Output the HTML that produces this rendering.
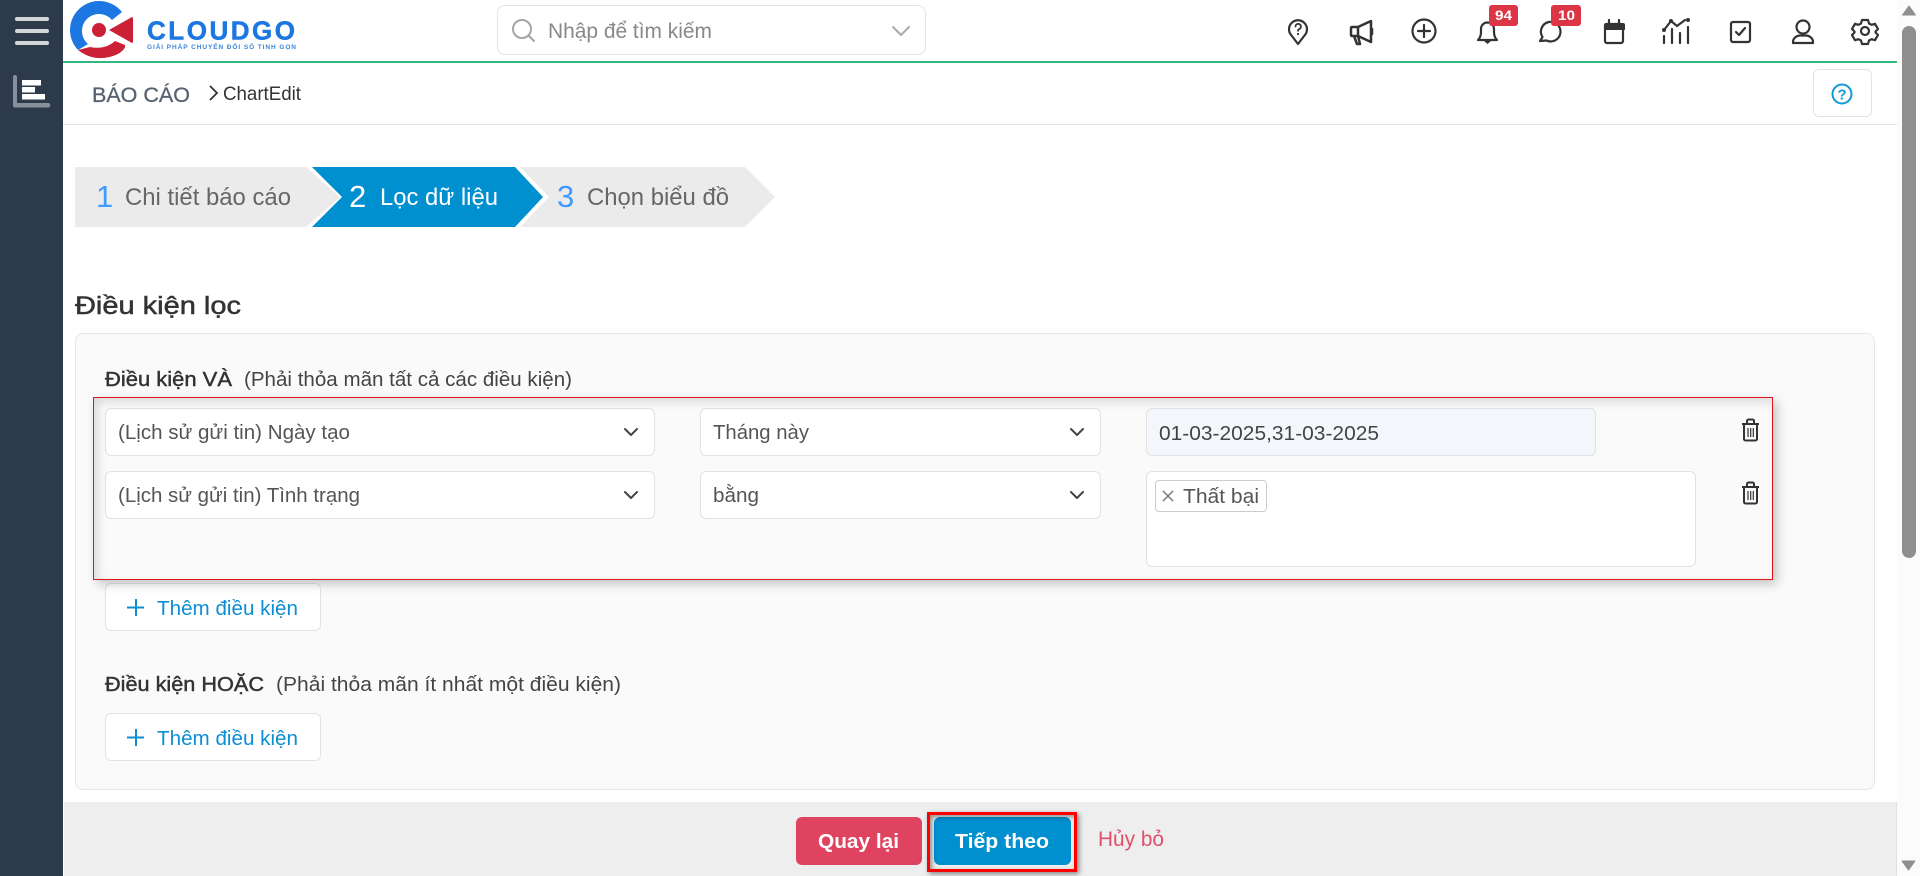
<!DOCTYPE html>
<html lang="vi">
<head>
<meta charset="utf-8">
<title>ChartEdit</title>
<style>
html,body{margin:0;padding:0;width:1920px;height:876px;overflow:hidden;background:#fff;font-family:"Liberation Sans",sans-serif}
.b{position:absolute;box-sizing:border-box}
.in{background:#fff;border:1px solid #e2e2e2;border-radius:6px}
svg.o{position:absolute;left:0;top:0;pointer-events:none}
svg.o text{font-family:"Liberation Sans",sans-serif}
.t{font-size:20px;fill:#555}
.d{font-size:20px;fill:#444}
.s{font-size:20px;fill:#333;stroke:#333;stroke-width:.45px}
.a{font-size:20px;fill:#0b8ed3}
.st{font-size:24px;fill:#666}
.n{font-size:31px;fill:#3f9bff}
.i{fill:none;stroke:#333;stroke-width:2.200;stroke-linecap:round;stroke-linejoin:round}
</style>
</head>
<body>
<!-- sidebar -->
<div class="b" style="left:0;top:0;width:63px;height:876px;background:#2c3a4a"></div>
<!-- top bar -->
<div class="b" style="left:63px;top:61px;width:1834px;height:2px;background:#35b77f"></div>
<div class="b" style="left:497px;top:5px;width:429px;height:50px;border:1px solid #e3e3e3;border-radius:8px"></div>
<div class="b" style="left:63px;top:124px;width:1834px;height:1px;background:#e2e2e2"></div>
<div class="b" style="left:1813px;top:69px;width:59px;height:48px;border:1px solid #e3e3e3;border-radius:6px"></div>
<!-- panel -->
<div class="b" style="left:75px;top:333px;width:1800px;height:457px;background:#fafafa;border:1px solid #e6e6e6;border-radius:8px"></div>
<div class="b in" style="left:105px;top:408px;width:550px;height:48px"></div>
<div class="b in" style="left:105px;top:471px;width:550px;height:48px"></div>
<div class="b in" style="left:700px;top:408px;width:401px;height:48px"></div>
<div class="b in" style="left:700px;top:471px;width:401px;height:48px"></div>
<div class="b in" style="left:1146px;top:408px;width:450px;height:48px;background:#f3f7fb"></div>
<div class="b in" style="left:1146px;top:471px;width:550px;height:96px"></div>
<div class="b" style="left:1155px;top:480px;width:112px;height:32px;border:1px solid #ccc;border-radius:4px;background:#fff"></div>
<div class="b in" style="left:105px;top:583px;width:216px;height:48px"></div>
<div class="b in" style="left:105px;top:713px;width:216px;height:48px"></div>
<div class="b" style="left:93px;top:397px;width:1680px;height:183px;border:1px solid #e0141c;box-shadow:4px 4px 10px rgba(0,0,0,.22),inset 4px 4px 10px rgba(0,0,0,.13)"></div>
<!-- footer -->
<div class="b" style="left:64px;top:802px;width:1833px;height:74px;background:#eee;border-right:1px solid #e0e0e0"></div>
<div class="b" style="left:796px;top:817px;width:126px;height:48px;background:#e0435f;border-radius:6px"></div>
<div class="b" style="left:934px;top:817px;width:137px;height:48px;background:#0090d0;border-radius:6px"></div>
<div class="b" style="left:927px;top:812px;width:150px;height:60px;border:3px solid #f00;box-shadow:2px 2px 5px rgba(0,0,0,.45),inset 2px 2px 5px rgba(0,0,0,.4)"></div>
<!-- scrollbar -->
<div class="b" style="left:1897px;top:0;width:23px;height:876px;background:#fbfbfb"></div>
<div class="b" style="left:1902px;top:26px;width:14px;height:532px;background:#8e8e8e;border-radius:7px"></div>

<svg class="o" width="1920" height="876" viewBox="0 0 1920 876" xmlns="http://www.w3.org/2000/svg">
<!-- sidebar icons -->
<g fill="#d3d6d9">
<rect x="15" y="17" width="34" height="4" rx="2"/><rect x="15" y="29" width="34" height="4" rx="2"/><rect x="15" y="41" width="34" height="4" rx="2"/>
</g>
<path d="M13 77a2 2 0 0 1 4 0v26h31a2 2 0 0 1 0 4.500H15a2 2 0 0 1-2-2z" fill="#87909a"/>
<g fill="#fff"><rect x="22" y="80" width="19" height="5.500"/><rect x="22" y="87" width="13" height="5.500"/><rect x="22" y="94" width="23" height="5.500"/></g>
<!-- logo -->
<path d="M122 12A29.500 29.500 0 0 0 99.500 1 29 29 0 0 0 78 50L88 44A17 17 0 0 1 99.500 14 17 17 0 0 1 112 20Z" fill="#1c77e2"/>
<path d="M78 50Q96 64 118 54 126 49 125 45L115 41Q105 50 90 47Z" fill="#cb2035"/>
<circle cx="99" cy="30" r="7" fill="#cb2035"/>
<path d="M109 30L132 17Q133 17 133 19V41Q133 43 132 43Z" fill="#cb2035"/>
<text x="147" y="39.500" font-size="26" font-weight="700" fill="#1c77e2" stroke="#1c77e2" stroke-width=".5" textLength="148" lengthAdjust="spacing">CLOUDGO</text>
<text x="147" y="49" font-size="6.500" font-weight="700" fill="#3a86dc" textLength="149" lengthAdjust="spacing">GIẢI PHÁP CHUYỂN ĐỔI SỐ TINH GỌN</text>
<!-- search -->
<g fill="none" stroke="#a5a5a5" stroke-width="2" stroke-linecap="round"><circle cx="522" cy="29" r="9"/><path d="M529 36l5 5"/></g>
<text x="548" y="38" font-size="21" fill="#888" textLength="164" lengthAdjust="spacingAndGlyphs">Nhập để tìm kiếm</text>
<path d="M893 27l8 8 8-8" fill="none" stroke="#a9a9a9" stroke-width="2" stroke-linecap="round"/>
<!-- top icons -->
<path class="i" d="M1298 44L1291.500 35.500A9 9 0 1 1 1304.500 35.500Z"/>
<path class="i" style="stroke-width:1.800" d="M1295.500 26.500a2.700 2.700 0 1 1 3.700 2.600c-.8.400-1.100.9-1.100 1.700"/><circle cx="1298" cy="34" r="1.100" fill="#333"/>
<path class="i" style="stroke-width:2.500" d="M1352 27h6l13-6v21l-13-6h-6a1 1 0 0 1-1-1v-7a1 1 0 0 1 1-1zM1358 27v9M1354 36l3 8h3l-2-8M1372 29v5"/>
<circle class="i" cx="1424" cy="31" r="11.500"/><path class="i" d="M1424 25v12M1418 31h12"/>
<path class="i" d="M1478 40c2-2 3-4 3-8v-3a6.500 6.500 0 0 1 13 0v3c0 4 1 6 3 8z"/><path d="M1484 41h7l-3.500 3z" fill="#333"/>
<path class="i" d="M1540 41l2.500-4a9.800 9.800 0 1 1 4 3.500z"/>
<rect class="i" x="1605" y="24" width="18" height="19" rx="2"/><path d="M1604 25a2 2 0 0 1 2-2h17a2 2 0 0 1 2 2v5h-21z" fill="#333"/><path class="i" d="M1609 20v3M1619 20v3"/>
<path class="i" d="M1664 30l7-9 6 5 8-6"/><circle cx="1664" cy="30" r="2" fill="#333"/><circle cx="1671" cy="21" r="2" fill="#333"/><circle cx="1688" cy="20" r="2" fill="#333"/>
<path class="i" d="M1664 36v7M1672 29v14M1680 33v10M1688 27v16"/>
<rect class="i" x="1731" y="22" width="19" height="20" rx="2"/><path class="i" d="M1736 32l3 3 6-7"/>
<circle class="i" cx="1803" cy="27" r="6.500"/><path class="i" d="M1793 43v-1c0-4 4-6.500 7-6.500h6c3 0 7 2.500 7 6.500v1z"/>
<path class="i" d="M1862 20h6l1 3.500 2.500 1.300 3.500-1 3 5.200-2.500 2.500v1l2.500 2.500-3 5.200-3.500-1-2.500 1.300-1 3.500h-6l-1-3.500-2.500-1.300-3.500 1-3-5.200 2.500-2.500v-1l-2.500-2.500 3-5.200 3.500 1 2.500-1.300z"/>
<circle class="i" cx="1865" cy="31" r="4"/>
<!-- badges -->
<rect x="1489" y="5" width="29" height="21" rx="3" fill="#dc3545"/>
<rect x="1551" y="5" width="30" height="21" rx="3" fill="#dc3545"/>
<text x="1495" y="20" font-size="14" font-weight="700" fill="#fff" textLength="17" lengthAdjust="spacingAndGlyphs">94</text>
<text x="1558" y="20" font-size="14" font-weight="700" fill="#fff" textLength="17" lengthAdjust="spacingAndGlyphs">10</text>
<!-- breadcrumb -->
<text x="92" y="102" font-size="21" fill="#56636f" stroke="#56636f" stroke-width=".3" textLength="98" lengthAdjust="spacingAndGlyphs">BÁO CÁO</text>
<path d="M210 86l7 7-7 7" fill="none" stroke="#333" stroke-width="1.800"/>
<text x="223" y="100" font-size="19" fill="#333" textLength="78" lengthAdjust="spacingAndGlyphs">ChartEdit</text>
<circle cx="1842" cy="94" r="9.500" fill="none" stroke="#0f9ad8" stroke-width="2"/>
<text x="1837.500" y="99.500" font-size="15" font-weight="700" fill="#0f9ad8">?</text>
<!-- stepper -->
<path d="M75 167H306L340 197 306 227H75Z" fill="#ebebeb"/>
<path d="M312 167H515L543 197 515 227H312L342 197Z" fill="#0090d0"/>
<path d="M520 167H745L775 197 745 227H520L549 197Z" fill="#ebebeb"/>
<text class="n" x="96" y="207">1</text>
<text class="st" x="125" y="205" textLength="166" lengthAdjust="spacingAndGlyphs">Chi tiết báo cáo</text>
<text class="n" x="349" y="207" style="fill:#fff">2</text>
<text class="st" x="380" y="205" textLength="118" lengthAdjust="spacingAndGlyphs" style="fill:#fff">Lọc dữ liệu</text>
<text class="n" x="557" y="207">3</text>
<text class="st" x="587" y="205" textLength="142" lengthAdjust="spacingAndGlyphs">Chọn biểu đồ</text>
<!-- heading -->
<text x="75" y="314" font-size="25" fill="#333" stroke="#333" stroke-width=".5" textLength="166" lengthAdjust="spacingAndGlyphs">Điều kiện lọc</text>
<text class="s" x="105" y="386" textLength="127" lengthAdjust="spacingAndGlyphs">Điều kiện VÀ</text>
<text class="d" x="244" y="386" textLength="328" lengthAdjust="spacingAndGlyphs">(Phải thỏa mãn tất cả các điều kiện)</text>
<!-- fields -->
<text class="t" x="118" y="439" textLength="232" lengthAdjust="spacingAndGlyphs">(Lịch sử gửi tin) Ngày tạo</text>
<text class="t" x="118" y="502" textLength="242" lengthAdjust="spacingAndGlyphs">(Lịch sử gửi tin) Tình trạng</text>
<text class="t" x="713" y="439" textLength="96" lengthAdjust="spacingAndGlyphs">Tháng này</text>
<text class="t" x="713" y="502" textLength="46" lengthAdjust="spacingAndGlyphs">bằng</text>
<text class="d" x="1159" y="440" textLength="220" lengthAdjust="spacingAndGlyphs">01-03-2025,31-03-2025</text>
<text class="t" x="1183" y="503" textLength="76" lengthAdjust="spacingAndGlyphs">Thất bại</text>
<path d="M1163 491l10 10M1173 491l-10 10" stroke="#777" stroke-width="1.500" fill="none"/>
<g fill="none" stroke="#444" stroke-width="2" stroke-linecap="round" stroke-linejoin="round">
<path d="M625 429l6 6 6-6M625 492l6 6 6-6M1071 429l6 6 6-6M1071 492l6 6 6-6"/>
</g>
<!-- trash -->
<g fill="none" stroke="#333" stroke-width="2">
<path d="M1742 424h17M1747 424v-3a1.500 1.500 0 0 1 1.500-1.500h4a1.500 1.500 0 0 1 1.500 1.500v3M1744 424v15a1.500 1.500 0 0 0 1.500 1.500h10a1.500 1.500 0 0 0 1.500-1.500v-15"/>
<path d="M1748 428v9M1750.700 428v9M1753.300 428v9" stroke-width="1.200"/>
<path d="M1742 487h17M1747 487v-3a1.500 1.500 0 0 1 1.500-1.500h4a1.500 1.500 0 0 1 1.500 1.500v3M1744 487v15a1.500 1.500 0 0 0 1.500 1.500h10a1.500 1.500 0 0 0 1.500-1.500v-15"/>
<path d="M1748 491v9M1750.700 491v9M1753.300 491v9" stroke-width="1.200"/>
</g>
<!-- add buttons -->
<path d="M136 599v17M127 607.500h17M136 729v17M127 737.500h17" stroke="#0b8ed3" stroke-width="2" fill="none"/>
<text class="a" x="157" y="615" textLength="141" lengthAdjust="spacingAndGlyphs">Thêm điều kiện</text>
<text class="a" x="157" y="745" textLength="141" lengthAdjust="spacingAndGlyphs">Thêm điều kiện</text>
<text class="s" x="105" y="691" textLength="159" lengthAdjust="spacingAndGlyphs">Điều kiện HOẶC</text>
<text class="d" x="276" y="691" textLength="345" lengthAdjust="spacingAndGlyphs">(Phải thỏa mãn ít nhất một điều kiện)</text>
<!-- footer text -->
<text x="818" y="848" font-size="20" font-weight="700" fill="#fff" textLength="81" lengthAdjust="spacingAndGlyphs">Quay lại</text>
<text x="955" y="848" font-size="20" font-weight="700" fill="#fff" textLength="94" lengthAdjust="spacingAndGlyphs">Tiếp theo</text>
<text x="1098" y="846" font-size="21" fill="#e0506a" textLength="66" lengthAdjust="spacingAndGlyphs">Hủy bỏ</text>
<!-- scrollbar arrows -->
<path d="M1909 6l6.500 9h-13z" fill="#8e8e8e" stroke="#8e8e8e" stroke-linejoin="round"/>
<path d="M1908.500 870l-6.500-9h13z" fill="#8e8e8e" stroke="#8e8e8e" stroke-linejoin="round"/>
</svg>
</body>
</html>
